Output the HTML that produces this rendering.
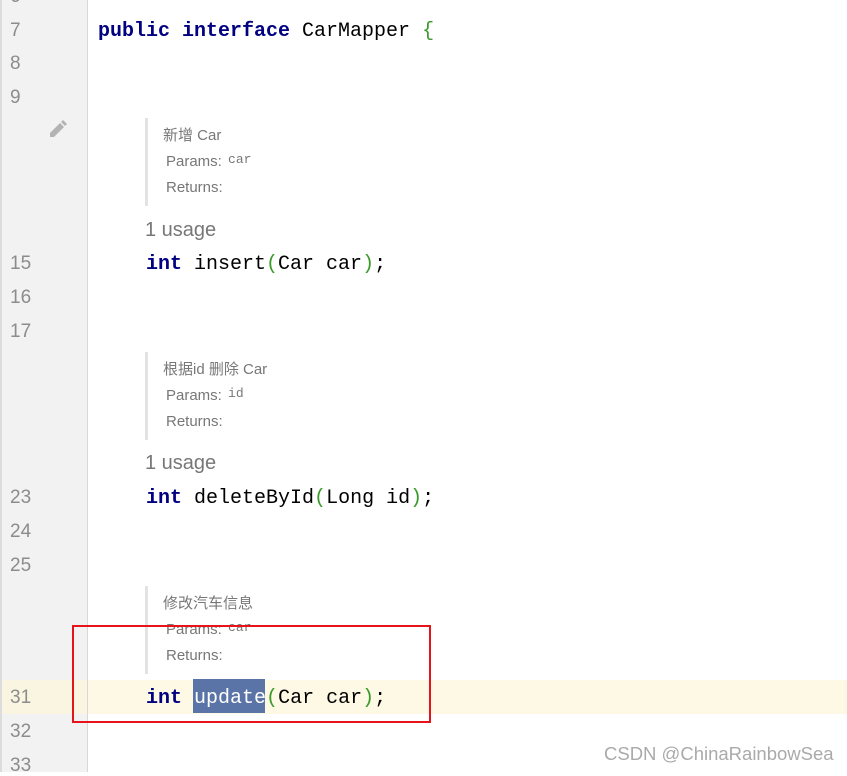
<!DOCTYPE html><html><head><meta charset="utf-8"><style>
body{margin:0;width:847px;height:772px;overflow:hidden;background:#fff;position:relative;font-family:"Liberation Mono",monospace}
.g{position:absolute;left:0;top:0;width:88px;height:772px;background:#f2f2f2;border-left:2px solid #dcdcdc;border-right:1px solid #d8d8d8;box-sizing:border-box}
.n{position:absolute;left:10px;font-size:19px;color:#8c8c8c;font-family:"Liberation Sans",sans-serif;line-height:20px}
.c{position:absolute;font-size:20px;line-height:24px;color:#000;white-space:pre}
.k{color:#000080;font-weight:bold}
.p{color:#3a9a2a}
.d{position:absolute;left:145px;border-left:3px solid #e3e3e3;font-family:"Liberation Sans","Noto Sans CJK SC",sans-serif;color:#777;font-size:15px}
.d div{position:absolute;left:15px;white-space:nowrap}
.u{position:absolute;left:145px;font-family:"Liberation Sans",sans-serif;font-size:20px;color:#777}
</style></head><body>
<div style="position:absolute;left:0;top:680px;width:847px;height:34px;background:#fdf9e4"></div>
<div class="g"></div>
<div style="position:absolute;left:2px;top:680px;width:85px;height:34px;background:#faf5e0"></div>
<div class="n" style="top:-13px">6</div>
<div class="n" style="top:21px">7</div>
<div class="n" style="top:54px">8</div>
<div class="n" style="top:88px">9</div>
<svg style="position:absolute;left:48px;top:120px" width="19" height="19" viewBox="0 0 19 19"><path d="M2 17 L2 13 L12 3 L16 7 L6 17 Z" fill="#b3b3b3"/><path d="M13 2 L15 0 L19 4 L17 6 Z" fill="#b3b3b3"/></svg>
<div class="n" style="top:254px">15</div>
<div class="n" style="top:288px">16</div>
<div class="n" style="top:322px">17</div>
<div class="n" style="top:488px">23</div>
<div class="n" style="top:522px">24</div>
<div class="n" style="top:556px">25</div>
<div class="n" style="top:688px">31</div>
<div class="n" style="top:722px">32</div>
<div class="n" style="top:756px">33</div>
<div class="c" style="left:98px;top:20px"><span class="k">public interface</span> CarMapper <span class="p">{</span></div>
<div class="d" style="top:118px;height:88px"><div style="top:6px">新增 Car</div><div style="top:35px;left:18px">Params: <span style="font-family:'Liberation Mono';font-size:13px;margin-left:2px;position:relative;top:-3px">car</span></div><div style="top:61px;left:18px">Returns:</div></div>
<div class="u" style="top:219px">1 usage</div>
<div class="c" style="left:146px;top:253px"><span class="k">int</span> insert<span class="p">(</span>Car car<span class="p">)</span>;</div>
<div class="d" style="top:352px;height:88px"><div style="top:6px">根据id 删除 Car</div><div style="top:35px;left:18px">Params: <span style="font-family:'Liberation Mono';font-size:13px;margin-left:2px;position:relative;top:-3px">id</span></div><div style="top:61px;left:18px">Returns:</div></div>
<div class="u" style="top:452px">1 usage</div>
<div class="c" style="left:146px;top:487px"><span class="k">int</span> deleteById<span class="p">(</span>Long id<span class="p">)</span>;</div>
<div class="d" style="top:586px;height:88px"><div style="top:6px">修改汽车信息</div><div style="top:35px;left:18px">Params: <span style="font-family:'Liberation Mono';font-size:13px;margin-left:2px;position:relative;top:-3px">car</span></div><div style="top:61px;left:18px">Returns:</div></div>
<div style="position:absolute;left:193px;top:679px;width:72px;height:34px;background:#5a74a8"></div>
<div class="c" style="left:146px;top:687px"><span class="k">int</span> <span style="color:#fff">update</span><span class="p">(</span>Car car<span class="p">)</span>;</div>
<div style="position:absolute;left:72px;top:625px;width:359px;height:98px;border:2px solid #e5141b;box-sizing:border-box"></div>
<div style="position:absolute;left:604px;top:743px;font-family:'Liberation Sans',sans-serif;font-size:18.5px;color:#aaa">CSDN @ChinaRainbowSea</div>
</body></html>
